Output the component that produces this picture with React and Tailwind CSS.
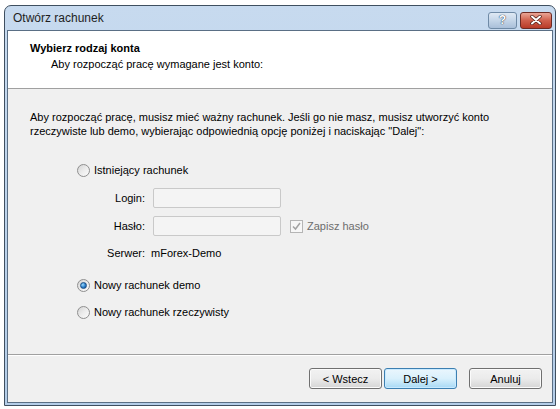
const Radio = ({ checked }) => (
  <span className="flex h-[13px] w-[13px] shrink-0 items-center justify-center rounded-full border border-[#8f8f8f] bg-gradient-to-br from-[#d4d4d4] via-[#ececec] to-[#fbfbfb]">
    {checked && (
      <span className="h-[7px] w-[7px] rounded-full border border-[#1b4f86] bg-[radial-gradient(circle_at_35%_35%,#9edcff,#2a7dc9_55%,#0f4f93)]" />
    )}
  </span>
)

const Field = () => (
  <div className="h-[20px] w-[128px] rounded-[2px] border border-[#c9c9c9] bg-[#f4f4f4]" />
)

const Button = ({ children, active }) => (
  <button
    className={
      active
        ? "flex h-[21px] w-[73px] items-center justify-center rounded-[3px] border border-[#3c7fb1] bg-gradient-to-b from-[#eaf6fd] via-[#d9f0fc] to-[#a7d9f5] text-[11px] text-black shadow-[inset_0_0_0_1px_#c9eaff]"
        : "flex h-[21px] w-[73px] items-center justify-center rounded-[3px] border border-[#707070] bg-gradient-to-b from-[#f2f2f2] via-[#ebebeb] to-[#d5d5d5] text-[11px] text-black shadow-[inset_0_0_0_1px_#fbfbfb]"
    }
  >
    {children}
  </button>
)

export default function App() {
  return (
    <div className="h-[409px] w-[560px] overflow-hidden bg-white pl-[4px] pt-[5px] font-['Liberation_Sans',Arial,sans-serif] text-[11px] leading-[14px] text-black">
      <div className="flex h-[401px] w-[552px] flex-col rounded-t-[7px] border border-[#3f4f60] bg-gradient-to-b from-[#c7daef] to-[#b4cde8] px-[2px] pb-[2px]">
        {/* title bar */}
        <div className="flex h-[24px] shrink-0 items-center justify-between pl-[6px]">
          <span className="text-[12px] text-[#1e1e1e]">Otwórz rachunek</span>
          <div className="mt-[4px] flex items-start gap-[3px] pr-[1px]">
            <div className="flex h-[17px] w-[29px] items-center justify-center rounded-[3px] border border-[#6f8aa6] bg-gradient-to-b from-[#dfe9f4] via-[#c4d5e8] to-[#a9bfd9] text-[12px] font-bold leading-none text-white [text-shadow:0_0_1px_#26374a,0_0_1px_#26374a]">
              ?
            </div>
            <div className="flex h-[17px] w-[32px] items-center justify-center rounded-[3px] border border-[#6d2a23] bg-gradient-to-b from-[#e9a596] via-[#cf5f4c] to-[#b83a27]">
              <svg width="12" height="10" viewBox="0 0 12 10">
                <path d="M2 1.5 L10 8.5 M10 1.5 L2 8.5" stroke="#4a1a12" strokeWidth="3.4" strokeLinecap="round" />
                <path d="M2 1.5 L10 8.5 M10 1.5 L2 8.5" stroke="#ffffff" strokeWidth="2" strokeLinecap="round" />
              </svg>
            </div>
          </div>
        </div>

        {/* client area */}
        <div className="flex flex-1 flex-col border border-[#5a6f85] bg-[#f0f0f0]">
          <div className="h-[58px] shrink-0 border-b border-[#a0a0a0] bg-white pl-[22px] pt-[10px]">
            <div className="font-bold">Wybierz rodzaj konta</div>
            <div className="pl-[21px] pt-[2px]">Aby rozpocząć pracę wymagane jest konto:</div>
          </div>

          <div className="flex h-[266px] shrink-0 flex-col border-b border-[#a0a0a0] pl-[22px] pt-[21px]">
            <p>
              Aby rozpocząć pracę, musisz mieć ważny rachunek. Jeśli go nie masz, musisz utworzyć konto
              <br />
              rzeczywiste lub demo, wybierając odpowiednią opcję poniżej i naciskając "Dalej":
            </p>

            <div className="pl-[47px] pt-[25px]">
              <label className="flex items-center gap-[4px]">
                <Radio />
                <span>Istniejący rachunek</span>
              </label>

              <div className="mt-[11px] grid w-fit grid-cols-[68px_128px_auto] items-center gap-x-[8px] gap-y-[8px]">
                <span className="text-right">Login:</span>
                <Field />
                <span />
                <span className="text-right">Hasło:</span>
                <Field />
                <span className="flex items-center gap-[4px] pl-[1px] text-[#6d6d6d]">
                  <span className="flex h-[13px] w-[13px] items-center justify-center border border-[#b5b5b5] bg-[#f7f7f7]">
                    <svg width="9" height="9" viewBox="0 0 9 9">
                      <path d="M1 4.5 L3.5 7 L8 1" fill="none" stroke="#a3a3a3" strokeWidth="1.5" />
                    </svg>
                  </span>
                  Zapisz hasło
                </span>
              </div>

              <div className="mt-[10px] grid w-fit grid-cols-[68px_auto] gap-x-[6px]">
                <span className="text-right">Serwer:</span>
                <span>mForex-Demo</span>
              </div>

              <label className="mt-[18px] flex items-center gap-[4px]">
                <Radio checked />
                <span>Nowy rachunek demo</span>
              </label>
              <label className="mt-[13px] flex items-center gap-[4px]">
                <Radio />
                <span>Nowy rachunek rzeczywisty</span>
              </label>
            </div>
          </div>

          <div className="flex flex-1 items-start justify-end border-t border-white pr-[10px] pt-[12px]">
            <div className="flex gap-[2px]">
              <Button>&lt; Wstecz</Button>
              <Button active>Dalej &gt;</Button>
            </div>
            <div className="ml-[12px]">
              <Button>Anuluj</Button>
            </div>
          </div>
        </div>
      </div>
    </div>
  )
}
